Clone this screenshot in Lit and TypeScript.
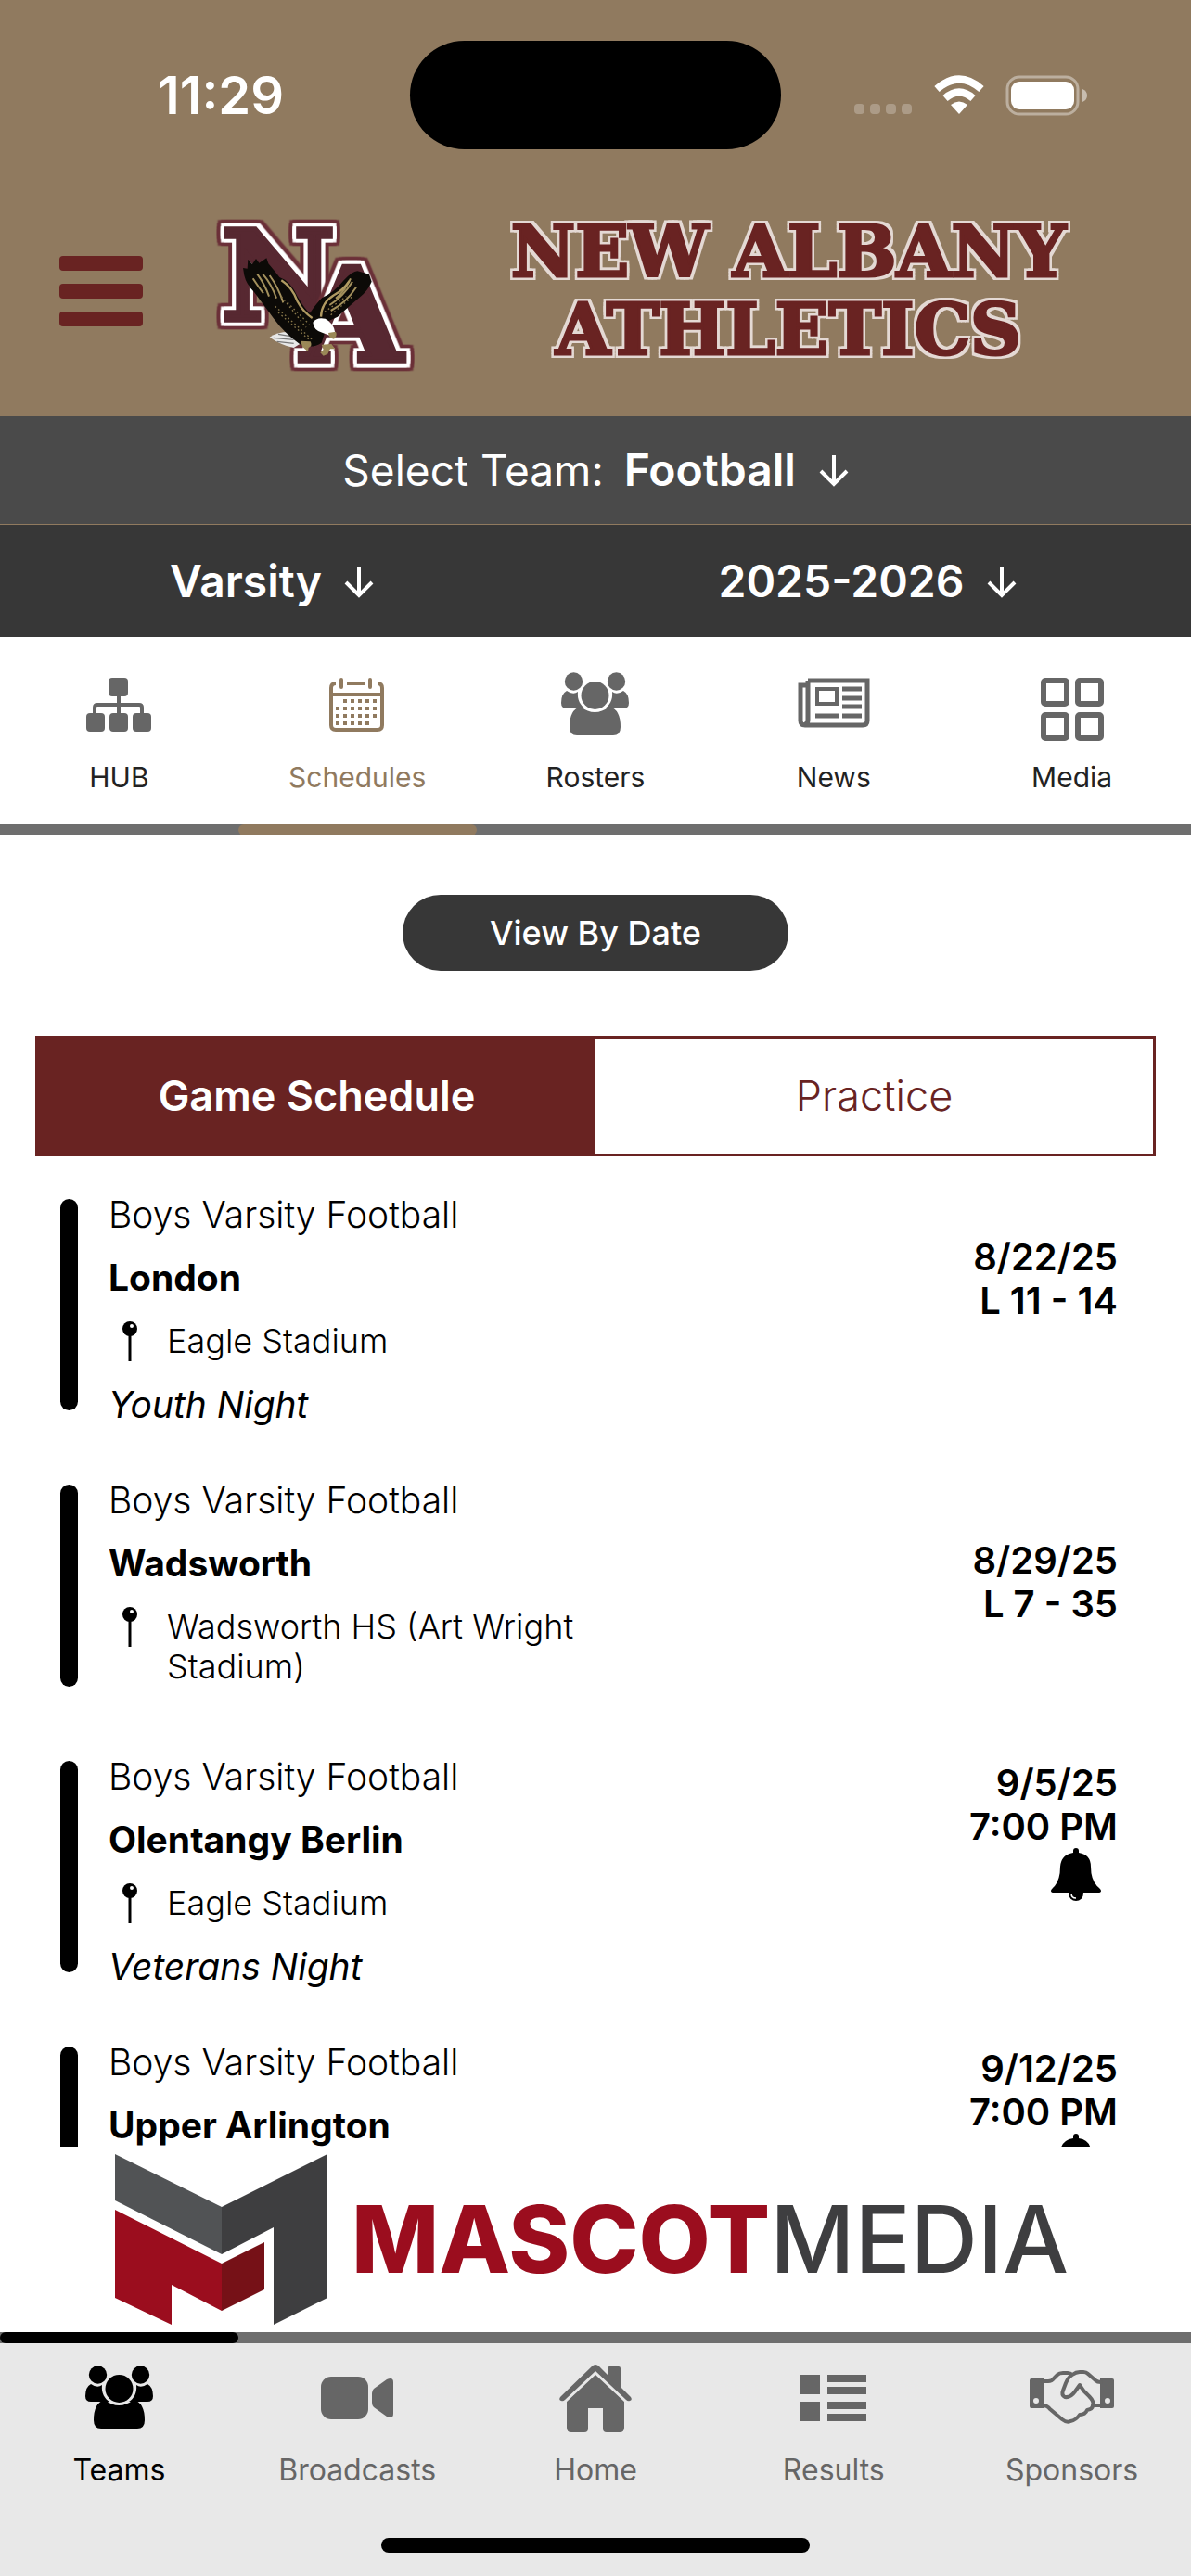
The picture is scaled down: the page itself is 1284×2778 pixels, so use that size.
import { LitElement, html, svg, css, nothing } from "lit";
import { customElement, property } from "lit/decorators.js";
import { classMap } from "lit/directives/class-map.js";

interface Game {
  team: string;
  opponent: string;
  venue: string;
  note?: string;
  date: string;
  result: string;
  alert?: boolean;
  kind: "home" | "away" | "upcoming";
}

const GAMES: Game[] = [
  { team: "Boys Varsity Football", opponent: "London", venue: "Eagle Stadium", note: "Youth Night", date: "8/22/25", result: "L 11 - 14", kind: "home" },
  { team: "Boys Varsity Football", opponent: "Wadsworth", venue: "Wadsworth HS (Art Wright Stadium)", date: "8/29/25", result: "L 7 - 35", kind: "away" },
  { team: "Boys Varsity Football", opponent: "Olentangy Berlin", venue: "Eagle Stadium", note: "Veterans Night", date: "9/5/25", result: "7:00 PM", alert: true, kind: "upcoming" },
  { team: "Boys Varsity Football", opponent: "Upper Arlington", venue: "Eagle Stadium", date: "9/12/25", result: "7:00 PM", alert: true, kind: "upcoming" },
];

const people = svg`
  <circle cx="13.5" cy="10" r="9.7"/><circle cx="59.5" cy="10" r="9.7"/>
  <path d="M6 20Q13 25 18 21C17 30 21 36 26 39H6Q0 39 0 33Q0 23 6 20Z"/>
  <path d="M67 20Q60 25 55 21C56 30 52 36 47 39H67Q73 39 73 33Q73 23 67 20Z"/>
  <circle cx="36.500" cy="25" r="15"/>
  <path d="M21 37Q36 49 52 37Q64 40 64 59Q64 68 56 68H17Q9 68 9 59Q9 40 21 37Z"/>`;

const square = (x: number, y: number) =>
  svg`<rect x=${x} y=${y} width="25" height="25" rx="2" fill="none" stroke="currentColor" stroke-width="6"/>`;

const calendarDots = [0, 1, 2, 3].flatMap((row) =>
  [0, 1, 2, 3, 4, 5]
    .filter((col) => !(row === 0 && col === 0) && !(row === 3 && col === 5))
    .map((col) => svg`<rect x=${7 + col * 8} y=${23 + row * 8} width="4" height="4"/>`)
);

const ICONS: Record<string, { w: number; h: number; art: unknown }> = {
  hub: {
    w: 70, h: 58,
    art: svg`<rect x="24" width="21" height="20" rx="4"/><rect y="38" width="20" height="20" rx="4"/><rect x="25" y="38" width="20" height="20" rx="4"/><rect x="50" y="38" width="20" height="20" rx="4"/><path d="M35 18V40M9 40V32Q9 29 12 29H57Q60 29 60 32V40" fill="none" stroke="currentColor" stroke-width="4"/>`,
  },
  calendar: {
    w: 60, h: 58,
    art: svg`<path d="M7 6Q2 6 2 11V51Q2 56 7 56H52Q57 56 57 51V11Q57 6 52 6M19 6H38M2 18H57" fill="none" stroke="currentColor" stroke-width="4"/><path d="M13 2V10M44 2V10" stroke="currentColor" stroke-width="4" stroke-linecap="round"/>${calendarDots}`,
  },
  people: { w: 73, h: 70, art: people },
  news: {
    w: 78, h: 58,
    art: svg`<path d="M11 3H75V46Q75 51 70 51H8Q3 51 3 46V8H9M11 3V45Q11 50 7 51" fill="none" stroke="currentColor" stroke-width="5"/><path d="M21 12H42V28H21Z" fill="none" stroke="currentColor" stroke-width="4"/><path d="M48 12H69M48 22H69M48 31H69M48 41H69M19 41H44" stroke="currentColor" stroke-width="5"/>`,
  },
  grid: { w: 68, h: 78, art: svg`${square(3, 13)}${square(40, 13)}${square(3, 50)}${square(40, 50)}` },
  video: {
    w: 78, h: 46,
    art: svg`<rect width="51" height="46" rx="11"/><path d="M57 13L71 3Q78 0 78 6V40Q78 46 71 43L57 33Q55 31 55 28V18Q55 15 57 13Z"/>`,
  },
  home: {
    w: 78, h: 73,
    art: svg`<path d="M39 0Q41 0 43 2L52 11V4Q52 2 54 2H64Q66 2 66 4V24L77 35Q79 38 76 39Q74 40 72 38L39 7L6 38Q4 40 2 39Q-1 38 1 35L35 2Q37 0 39 0Z"/><path d="M39 11L70 40V68Q70 73 65 73H51Q47 73 47 69V47H31V69Q31 73 27 73H13Q8 73 8 68V40Z"/>`,
  },
  list: {
    w: 71, h: 50,
    art: svg`<rect width="21" height="21"/><rect y="29" width="21" height="21"/><rect x="29" width="42" height="8"/><rect x="29" y="13" width="42" height="8"/><rect x="29" y="29" width="42" height="8"/><rect x="29" y="42" width="42" height="8"/>`,
  },
  handshake: {
    w: 91, h: 60,
    art: svg`<path fill-rule="evenodd" d="M2 9H15V41H2Q0 41 0 39V11Q0 9 2 9ZM7 30A3 3 0 1 0 7 36A3 3 0 1 0 7 30ZM76 9H89Q91 9 91 11V39Q91 41 89 41H76ZM84 30A3 3 0 1 0 84 36A3 3 0 1 0 84 30Z"/><path d="M14 12H20Q24 12 26 9L30 5Q32 3 36 3H41Q44 3 46 5Q50 2 54 2H58Q61 2 63 4L71 11Q73 13 77 13M46 5Q42 7 39 14L36 22Q34 27 38 29Q44 30 49 23L54 16Q58 23 64 28Q70 34 68 38Q68 42 62 43Q60 48 54 48Q50 54 44 55Q40 57 35 53L22 42Q19 38 14 38M69 38H77" fill="none" stroke="currentColor" stroke-width="4" stroke-linejoin="round" stroke-linecap="round"/>`,
  },
  arrow: {
    w: 32, h: 34,
    art: svg`<path d="M16 1V32M2 18L16 32L30 18" fill="none" stroke="currentColor" stroke-width="4"/>`,
  },
  pin: {
    w: 16, h: 47,
    art: svg`<path d="M8 17V46" stroke="currentColor" stroke-width="3"/><circle cx="8" cy="11" r="8"/><circle cx="10" cy="8" r="2" fill="#fff"/>`,
  },
  bell: {
    w: 54, h: 57,
    art: svg`<path d="M27 0Q30 0 30 3V5Q43 7 43 20Q43 36 52 43Q54 45 54 46Q54 48 51 48H3Q0 48 0 46Q0 45 2 43Q10 36 10 20Q11 7 24 5V3Q24 0 27 0Z"/><circle cx="27" cy="49" r="8"/><path d="M22 49Q22 54 27 54" fill="none" stroke="#fff" stroke-width="1.500"/>`,
  },
  menu: {
    w: 90, h: 76,
    art: svg`<rect width="90" height="16" rx="4"/><rect y="30" width="90" height="16" rx="4"/><rect y="60" width="90" height="16" rx="4"/>`,
  },
};

@customElement("app-icon")
class AppIcon extends LitElement {
  @property() name = "";

  static styles = css`
    :host { display: inline-flex; }
    .art { display: block; overflow: visible; }
  `;

  render() {
    const icon = ICONS[this.name];
    if (!icon) return nothing;
    return html`<svg class="art" width=${icon.w} height=${icon.h} viewBox="0 0 ${icon.w} ${icon.h}" fill="currentColor" aria-hidden="true">${icon.art}</svg>`;
  }
}

@customElement("app-dropdown")
class AppDropdown extends LitElement {
  @property() label = "";
  @property() value = "";
  @property({ type: Boolean, attribute: "show-label" }) showLabel = false;

  static styles = css`
    :host { display: flex; justify-content: center; align-items: center; color: #fff; }
    .label { font-size: 46px; font-weight: 400; margin-right: 18px; }
    .select {
      appearance: none; border: 0; margin: 0; padding: 0 4px; background: none; color: inherit;
      font: 600 48px/60px Inter, "Liberation Sans", sans-serif;
    }
    .arrow { margin-left: 20px; }
  `;

  render() {
    return html`
      ${this.showLabel ? html`<label for="choice" class="label">${this.label}</label>` : nothing}
      <select id="choice" class="select" aria-label=${this.label}><option>${this.value}</option></select>
      <app-icon class="arrow" name="arrow"></app-icon>
    `;
  }
}

@customElement("game-row")
class GameRow extends LitElement {
  @property({ attribute: false }) game!: Game;

  static styles = css`
    :host { display: flex; align-items: stretch; color: #000; }
    .stripe { flex: none; width: 19px; border-radius: 10px; background: #000; }
    .info { flex: 1; display: flex; flex-direction: column; gap: 20px; margin: -7px 0 -18px 33px; }
    .away { margin-bottom: 0; }
    .line { margin: 0; font-size: 39px; line-height: 48px; font-weight: 300; }
    .opponent { font-weight: 700; }
    .venue { display: flex; align-items: flex-start; gap: 32px; padding-left: 15px; max-width: 520px; }
    .place { font-size: 36px; line-height: 43px; padding-top: 3px; font-weight: 300; }
    .note { font-style: italic; font-weight: 400; padding-top: 2px; }
    .when { text-align: right; font-size: 40px; line-height: 47px; font-weight: 600; }
    .when-home { padding-top: 39px; }
    .when-away { padding-top: 58px; }
    .bell { display: flex; border: 0; margin: 0 0 0 auto; padding: 0 18px 0 0; background: none; color: inherit; }
  `;

  render() {
    const g = this.game;
    return html`
      <span class="stripe"></span>
      <div class=${classMap({ info: true, away: g.kind === "away" })}>
        <p class="line">${g.team}</p>
        <h2 class="line opponent">${g.opponent}</h2>
        <div class="venue"><app-icon name="pin"></app-icon><span class="place">${g.venue}</span></div>
        ${g.note ? html`<p class="line note">${g.note}</p>` : nothing}
      </div>
      <div class="when when-${g.kind}">
        <div>${g.date}</div>
        <div>${g.result}</div>
        ${g.alert ? html`<button class="bell" aria-label="Set reminder"><app-icon name="bell"></app-icon></button>` : nothing}
      </div>
    `;
  }
}

@customElement("school-crest")
class SchoolCrest extends LitElement {
  static styles = css`
    :host { display: block; }
    .art { display: block; overflow: visible; }
    .letter {
      font-family: "DejaVu Serif", serif; font-weight: 700; text-anchor: middle;
      fill: #572831; stroke: #572831; stroke-width: 16px; stroke-linejoin: miter;
      filter:
        drop-shadow(11px 0 0 #fff) drop-shadow(-11px 0 0 #fff) drop-shadow(0 11px 0 #fff) drop-shadow(0 -11px 0 #fff)
        drop-shadow(10px 0 0 #6b3038) drop-shadow(-10px 0 0 #6b3038) drop-shadow(0 10px 0 #6b3038) drop-shadow(0 -10px 0 #6b3038);
    }
    .n { font-size: 404px; }
    .a { font-size: 424px; }
  `;

  render() {
    return html`
      <svg class="art" width="220" height="172" viewBox="90 55 660 516" role="img" aria-label="New Albany Eagles crest">
        <text class="letter n" x="300" y="405">N</text>
        <text class="letter a" x="538" y="540">A</text>
        <path d="M272 462Q300 440 360 446L392 470L350 496Q310 488 272 462Z" fill="#e8e8e8"/>
        <path d="M284 464L350 470M296 476L350 482M300 452L356 462" stroke="#777" stroke-width="4"/>
        <path d="M186 238L200 240L202 210L216 226L228 208L238 222L262 206L268 224Q290 250 304 268Q340 280 362 330Q385 370 402 384Q425 350 442 334Q480 318 512 278Q540 248 556 248L594 258L602 282Q590 312 562 334Q520 370 492 396L462 410L440 480Q410 500 372 486Q320 450 284 400Q240 340 222 316Q196 290 190 262Z" fill="#0c0a07"/>
        <path d="M218 272Q236 300 252 320M232 258Q256 290 270 330M250 258Q278 290 294 336M272 262Q300 300 316 350M466 358Q510 330 540 282M470 376Q520 350 552 300M486 336Q516 312 534 272" fill="none" stroke="#a3905c" stroke-width="6"/>
        <path d="M310 278Q345 300 362 346Q380 380 410 400M438 396Q440 350 480 326Q510 310 530 280" fill="none" stroke="#b09a62" stroke-width="7"/>
        <path d="M290 362L410 470M300 382L400 470M330 350L400 420M310 330L390 430M450 380L520 330M470 390L540 330" fill="none" stroke="#8a794b" stroke-width="4" stroke-dasharray="5 9"/>
        <path d="M412 414Q424 396 452 402Q480 416 484 448L466 456L444 448Q414 440 412 414Z" fill="#fff"/>
        <path d="M462 448L486 444Q492 456 480 468Q464 466 462 448Z" fill="#9a8857"/>
        <path d="M372 474L404 476Q412 490 398 496L396 508L386 500L378 492ZM440 486L472 484L484 500L468 500L460 516L446 522L436 512L446 502Z" fill="#9a8857"/>
      </svg>
    `;
  }
}

interface Tab { icon: string; text: string; }

const TOP_TABS: Tab[] = [
  { icon: "hub", text: "HUB" },
  { icon: "calendar", text: "Schedules" },
  { icon: "people", text: "Rosters" },
  { icon: "news", text: "News" },
  { icon: "grid", text: "Media" },
];

const BOTTOM_TABS: Tab[] = [
  { icon: "people", text: "Teams" },
  { icon: "video", text: "Broadcasts" },
  { icon: "home", text: "Home" },
  { icon: "list", text: "Results" },
  { icon: "handshake", text: "Sponsors" },
];

@customElement("app-root")
class AppRoot extends LitElement {
  static styles = css`
    :host {
      display: flex; flex-direction: column; height: 100vh; overflow: hidden;
      background: #fff; font-family: Inter, "Liberation Sans", sans-serif;
    }
    .header { background: #907a5f; color: #fff; }
    .status { display: grid; grid-template-columns: 1fr 400px 1fr; align-items: center; padding-top: 44px; }
    .clock { font-size: 56px; line-height: 68px; font-weight: 600; text-align: center; padding-left: 34px; }
    .island { height: 117px; border-radius: 59px; background: #000; }
    .signals { display: flex; justify-content: flex-end; padding-right: 112px; }
    .brand { display: flex; align-items: center; padding: 18px 34px 0 64px; height: 270px; }
    .menu { display: flex; border: 0; padding: 0; margin: 0 76px 0 0; background: none; color: #692322; }
    .school {
      flex: 1; margin: 0; text-align: center; font: 700 76px/84px "DejaVu Serif", serif; color: #692322;
      -webkit-text-stroke: 3px #692322;
      text-shadow: 4px 0 #e4d9d4, -4px 0 #e4d9d4, 0 4px #e4d9d4, 0 -4px #e4d9d4,
        4px 4px #e4d9d4, -4px 4px #e4d9d4, 4px -4px #e4d9d4, -4px -4px #e4d9d4;
    }
    .school-line { display: block; }
    .team-bar { background: #4a4a4a; padding: 28px 0; border-bottom: 1px solid #907a5f; }
    .filters { display: grid; grid-template-columns: 1fr 1fr; background: #373737; padding: 31px 0 30px; }
    .filter { padding-right: 60px; }
    .tabs { display: grid; grid-template-columns: repeat(5, 1fr); }
    .tab {
      display: flex; flex-direction: column; align-items: center; gap: 14px;
      text-decoration: none; color: #666;
    }
    .glyph { display: flex; align-items: center; justify-content: center; height: 80px; }
    .top { padding: 33px 0 27px; }
    .top .tab-text { color: #222; font-size: 30px; line-height: 48px; }
    .top .current, .top .current .tab-text { color: #907a5f; }
    .bottom { background: #e8e8e8; padding: 19px 0 49px; }
    .bottom .tab-text { font-size: 32px; line-height: 48px; font-weight: 400; }
    .bottom .current { color: #000; }
    .track { display: grid; grid-template-columns: repeat(5, 1fr); height: 12px; background: #6e6e6e; }
    .thumb { border-radius: 6px; }
    .thumb-top { grid-column: 2; background: #907a5f; }
    .thumb-bottom { grid-column: 1; background: #000; }
    .content { flex: 1 1 0; min-height: 0; overflow: hidden; display: flex; flex-direction: column; }
    .by-date {
      align-self: center; flex: none; margin: 64px 0 70px; padding: 0 94px; border: 0; border-radius: 41px;
      background: #373737; color: #fff; font: 500 36px/82px Inter, "Liberation Sans", sans-serif;
    }
    .switch { flex: none; display: grid; grid-template-columns: 1fr 1fr; margin: 0 38px; border: 3px solid #692322; }
    .choice {
      border: 0; margin: 0; padding: 0; background: #fff; color: #692322;
      font: 300 45px/124px Inter, "Liberation Sans", sans-serif;
    }
    .chosen { background: #692322; color: #fff; font-weight: 600; }
    .games { list-style: none; margin: 46px 79px 0 65px; padding: 0; display: flex; flex-direction: column; gap: 80px; }
    .sponsor { display: flex; align-items: center; gap: 26px; padding: 8px 0 8px 124px; }
    .sponsor-mark { flex: none; display: block; }
    .sponsor-name { font: 800 100px/120px Inter, "Liberation Sans", sans-serif; color: #9b0d1e; white-space: nowrap; }
    .sponsor-tail { font-weight: 500; color: #3e3e40; }
    .home-bar { background: #e8e8e8; padding-bottom: 25px; display: flex; justify-content: center; }
    .home-pill { width: 36%; height: 16px; border-radius: 8px; background: #000; }
  `;

  private tab(t: Tab, current: boolean) {
    return html`<a href="#" class=${classMap({ tab: true, current })} aria-current=${current ? "page" : "false"}>
      <span class="glyph"><app-icon name=${t.icon}></app-icon></span>
      <span class="tab-text">${t.text}</span>
    </a>`;
  }

  render() {
    return html`
      <header class="header">
        <div class="status">
          <span class="clock">11:29</span>
          <span class="island"></span>
          <span class="signals">
            <svg width="251" height="44" viewBox="0 0 251 44" fill="#fff" aria-hidden="true">
              <g opacity="0.25"><rect y="31" width="11" height="11" rx="4"/><rect x="17" y="31" width="11" height="11" rx="4"/><rect x="34" y="31" width="11" height="11" rx="4"/><rect x="51" y="31" width="11" height="11" rx="4"/></g>
              <g fill="none" stroke="#fff" stroke-width="8"><path d="M89 15Q113 -6 137 15"/><path d="M98 25Q113 12 128 25"/></g>
              <path d="M104 32Q113 25 122 32L113 42Z"/>
              <rect x="165" y="2" width="76" height="40" rx="13" fill="none" stroke="#fff" stroke-opacity="0.4" stroke-width="3"/>
              <rect x="169" y="7" width="68" height="30" rx="9"/>
              <path d="M246 15Q251 17 251 22Q251 27 246 29Z" opacity="0.5"/>
            </svg>
          </span>
        </div>
        <div class="brand">
          <button class="menu" aria-label="Menu"><app-icon name="menu"></app-icon></button>
          <school-crest></school-crest>
          <h1 class="school"><span class="school-line">NEW ALBANY</span><span class="school-line">ATHLETICS</span></h1>
        </div>
      </header>
      <app-dropdown class="team-bar" label="Select Team:" value="Football" show-label></app-dropdown>
      <div class="filters">
        <app-dropdown class="filter" label="Level" value="Varsity"></app-dropdown>
        <app-dropdown class="filter" label="Season" value="2025-2026"></app-dropdown>
      </div>
      <nav class="tabs top">${TOP_TABS.map((t, i) => this.tab(t, i === 1))}</nav>
      <div class="track"><span class="thumb thumb-top"></span></div>
      <main class="content">
        <button class="by-date">View By Date</button>
        <div class="switch">
          <button class="choice chosen" aria-pressed="true">Game Schedule</button>
          <button class="choice" aria-pressed="false">Practice</button>
        </div>
        <ul class="games">${GAMES.map((g) => html`<li><game-row .game=${g}></game-row></li>`)}</ul>
      </main>
      <div class="sponsor">
        <svg class="sponsor-mark" width="229" height="184" viewBox="0 0 229 184" aria-hidden="true">
          <path d="M0 0L115 57V108L0 50Z" fill="#515355"/>
          <path d="M115 57L229 0V155L171 184V79L115 108Z" fill="#3e3e40"/>
          <path d="M0 60L115 118V169L61 141V184L0 155Z" fill="#9b0d1e"/>
          <path d="M115 118L161 95V146L115 169Z" fill="#761117"/>
        </svg>
        <span class="sponsor-name">MASCOT<span class="sponsor-tail">MEDIA</span></span>
      </div>
      <div class="track"><span class="thumb thumb-bottom"></span></div>
      <nav class="tabs bottom">${BOTTOM_TABS.map((t, i) => this.tab(t, i === 0))}</nav>
      <div class="home-bar"><span class="home-pill"></span></div>
    `;
  }
}
